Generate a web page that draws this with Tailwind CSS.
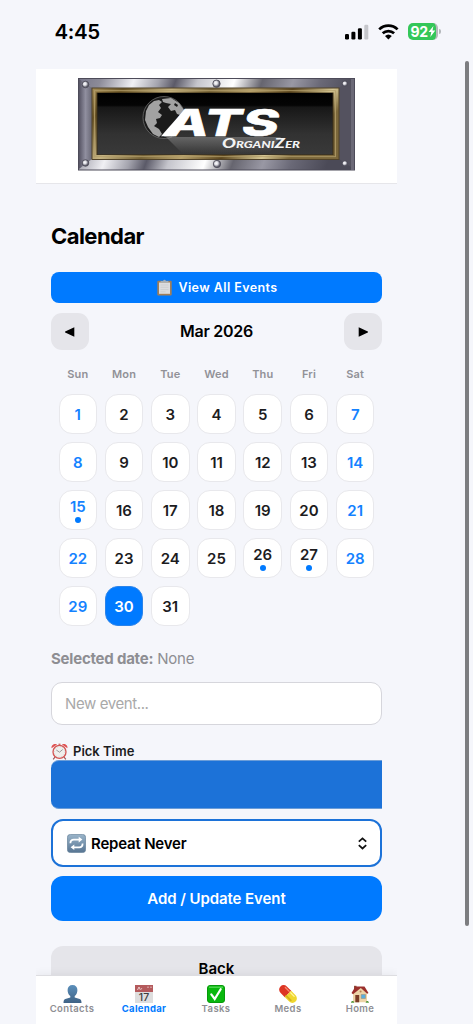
<!DOCTYPE html>
<html lang="en">
<head>
    <meta charset="UTF-8">
    <meta name="viewport" content="width=device-width, initial-scale=1.0">
    <title>ATS Organizer - Calendar</title>
    <script src="https://cdn.jsdelivr.net/npm/@tailwindcss/browser@4"></script>
</head>
<body class="relative h-[1024px] overflow-hidden bg-[#f5f6fb] text-black font-['Inter','Liberation_Sans',sans-serif]">

    <!-- Status bar -->
    <div class="flex h-[69px] items-start justify-between pl-[54.5px] pr-[32px]">
        <span id="clock" class="mt-[20px] text-[20.5px] leading-6 font-semibold tracking-[-0.4px]">4:45</span>
        <div class="mt-[23px] flex h-[17px] items-center">
            <svg class="mr-[9px]" width="24" height="16" viewBox="0 0 24 16">
                <rect x="0" y="10" width="4" height="5.5" rx="1.2"/>
                <rect x="6.4" y="7.8" width="4" height="7.7" rx="1.2"/>
                <rect x="12.9" y="4.2" width="4" height="11.3" rx="1.2"/>
                <rect x="19.3" y="0.8" width="4" height="14.7" rx="1.2" fill="#c5c6cb"/>
            </svg>
            <svg class="mr-[9px]" width="21" height="16" viewBox="0 0 21 16" fill="none" stroke="#000" stroke-width="2.7">
                <path d="M1.2 5.4a13.2 13.2 0 0 1 18.4 0"/>
                <path d="M4.7 9.3a8.3 8.3 0 0 1 11.4 0"/>
                <path d="M10.4 15.6L7 12.1a5 5 0 0 1 6.8 0z" fill="#000" stroke="none"/>
            </svg>
            <div class="flex h-[17px] w-[30px] items-center overflow-hidden rounded-[5px] border-r-2 border-[#b4b8b9] bg-[#34c759] pl-[2.5px] text-[14px] leading-none font-bold tracking-[-0.4px] text-white">
                <span id="battery">92</span>
                <svg width="8" height="11" viewBox="0 0 8 11" fill="#fff"><path d="M5.4 0L.6 6.1h2.7L2.3 11l5-6.4H4.5z"/></svg>
            </div>
            <div class="ml-px h-[5px] w-[2px] rounded-r-full bg-[#b4b8bb]"></div>
        </div>
    </div>

    <div class="ml-[36px] w-[361px]">
        <!-- Logo -->
        <header class="flex h-[115px] justify-center border-b border-[#e6e6ea] bg-white pt-[9px]">
            <svg class="ml-[1px]" width="278" height="93" viewBox="0 0 278 93">
                <defs>
                    <linearGradient id="steel" x1="0" x2="1" y1="0" y2="0.12">
                        <stop offset="0" stop-color="#77768a"/>
                        <stop offset=".08" stop-color="#8c8b98"/>
                        <stop offset=".2" stop-color="#f0f0f4"/>
                        <stop offset=".29" stop-color="#a3a3ad"/>
                        <stop offset=".35" stop-color="#5b5a68"/>
                        <stop offset=".43" stop-color="#c5c5cc"/>
                        <stop offset=".56" stop-color="#ffffff"/>
                        <stop offset=".66" stop-color="#66656f"/>
                        <stop offset=".77" stop-color="#9998a4"/>
                        <stop offset=".87" stop-color="#6a6977"/>
                        <stop offset="1" stop-color="#4b4a57"/>
                    </linearGradient>
                    <linearGradient id="side" x1="0" x2="1">
                        <stop offset="0" stop-color="#555363"/>
                        <stop offset=".5" stop-color="#908f9f"/>
                        <stop offset="1" stop-color="#686775"/>
                    </linearGradient>
                    <linearGradient id="gold" x1="0" x2="1" y1="0" y2=".3">
                        <stop offset="0" stop-color="#a68e58"/>
                        <stop offset=".12" stop-color="#6b5526"/>
                        <stop offset=".3" stop-color="#c5b382"/>
                        <stop offset=".45" stop-color="#756236"/>
                        <stop offset=".6" stop-color="#b8a26c"/>
                        <stop offset=".75" stop-color="#5c461e"/>
                        <stop offset=".9" stop-color="#d6c794"/>
                        <stop offset="1" stop-color="#7b673b"/>
                    </linearGradient>
                    <linearGradient id="panel" x1="0" x2="0" y1="0" y2="1">
                        <stop offset="0" stop-color="#000"/>
                        <stop offset=".2" stop-color="#050505"/>
                        <stop offset=".23" stop-color="#171717"/>
                        <stop offset=".67" stop-color="#323232"/>
                        <stop offset="1" stop-color="#393939"/>
                    </linearGradient>
                    <linearGradient id="shine" x1="0" x2="0" y1="0" y2="1">
                        <stop offset="0" stop-color="#fff" stop-opacity=".25"/>
                        <stop offset="1" stop-color="#fff" stop-opacity="0"/>
                    </linearGradient>
                    <radialGradient id="rivet" cx=".4" cy=".4">
                        <stop offset="0" stop-color="#fff"/>
                        <stop offset=".45" stop-color="#dedee4"/>
                        <stop offset="1" stop-color="#5c5b68"/>
                    </radialGradient>
                </defs>
                <rect x=".5" y=".5" width="276" height="91.5" fill="url(#steel)" stroke="#4d4b59"/>
                <path d="M1 1L14 10V81L1 91z" fill="url(#side)"/>
                <path d="M276 1L261 10V81L276 91z" fill="#54525f"/>
                <path d="M273 1h3v91h-3z" fill="#6b6977"/>
                <rect x="14" y="10" width="247" height="71.5" fill="url(#gold)" stroke="#504228"/>
                <rect x="16.5" y="12.7" width="241" height="66" fill="none" stroke="#b39f6c" stroke-width=".8"/>
                <rect x="18.5" y="14.5" width="237" height="62.5" fill="#3c2e14"/>
                <rect x="19.5" y="15" width="235" height="61.5" fill="url(#panel)"/>
                <g fill="url(#rivet)" stroke="#4b4a57" stroke-width=".8">
                    <circle cx="7.5" cy="6.5" r="3.3"/>
                    <circle cx="138.5" cy="5.7" r="3.7"/>
                    <circle cx="267" cy="5.7" r="2.8"/>
                    <circle cx="7.5" cy="85" r="3.3"/>
                    <circle cx="139" cy="86" r="3.7"/>
                    <circle cx="267" cy="85.5" r="2.8"/>
                </g>

                <!-- Globe -->
                <circle cx="86" cy="39.5" r="21" fill="#1a1a1a" stroke="#777" stroke-width=".7"/>
                <path d="M68 33l3-6 5-4 5-1 3 2-3 3 2 3-3 4 4 3-2 3-4 1 1 4-3 3 5 3 3 5-3 3-6-3-5-7-3-7z" fill="#a2a2a2"/>
                <path d="M84 21l9-1 8 5 5 7-1 6-6-2-2-4-4 1-3-4 3-3-5-1-3-1zM97 25l3 2-1 2-3-2z" fill="#a2a2a2" fill-rule="evenodd"/>
                <path d="M88 59h115l-12 16H104z" fill="url(#shine)"/>
                <path d="M83 58.3L107 31h10L94 58.3z" fill="#fff"/>
                <text x="88" y="58.3" font-family="Inter, Liberation Sans, sans-serif" font-size="37" font-weight="800" font-style="italic" fill="#fff" stroke="#fff" stroke-width=".5" textLength="113" lengthAdjust="spacingAndGlyphs">ATS</text>
                <text x="144" y="70.3" font-family="Lato, Open Sans, sans-serif" font-size="14" font-weight="900" font-style="italic" font-variant="small-caps" fill="#f3f3f3" textLength="78" lengthAdjust="spacingAndGlyphs">OrganiZer</text>
            </svg>
        </header>

        <main class="px-[15px]">
            <h1 class="mt-[37px] text-[22px] leading-[30px] font-bold tracking-[-0.55px]"><span id="title">Calendar</span></h1>

            <button class="mt-[21px] flex h-[31px] w-full items-center justify-center gap-[6px] rounded-[8px] bg-[#007aff] pl-[2px] text-[12.5px] font-semibold tracking-[0.42px] text-white">
                <svg width="15" height="17" viewBox="0 0 15 17">
                    <rect x=".3" y="1.8" width="14.4" height="14.8" rx="1" fill="#a17e58"/>
                    <rect x="2" y="3.5" width="11" height="11.3" fill="#dcdddf"/>
                    <path d="M3.5 6h8M3.5 8.3h8M3.5 10.6h8M3.5 12.8h5" stroke="#c9cacc" stroke-width=".7"/>
                    <path d="M3.6 3.6V2h2.6a1.3 1.3 0 0 1 2.6 0h2.6v1.6z" fill="#a3afb9"/>
                </svg>
                <span class="pt-[2px]">View All Events</span>
            </button>

            <!-- Month switcher -->
            <div class="mt-[10px] flex h-[37px] items-center justify-between">
                <button class="flex h-full w-[38px] items-center justify-center rounded-[11px] bg-[#e5e5ea]">
                    <svg width="10" height="10" viewBox="0 0 10 10"><path d="M9.3.3v9.4L.2 5.5a.6.6 0 0 1 0-1z"/></svg>
                </button>
                <h2 class="pb-[2px] text-[16px] font-semibold tracking-[-0.25px]"><span>Mar 2026</span></h2>
                <button class="flex h-full w-[38px] items-center justify-center rounded-[11px] bg-[#e5e5ea]">
                    <svg width="10" height="10" viewBox="0 0 10 10"><path d="M.7.3v9.4l9.1-4.2a.6.6 0 0 0 0-1z"/></svg>
                </button>
            </div>

            <div class="mx-[7.5px] mt-[16px] grid h-[16px] grid-cols-7 gap-x-[7.7px] text-center text-[11px] leading-[16px] font-semibold tracking-[0.15px] text-[#919197]">
                <span>Sun</span><span>Mon</span><span>Tue</span><span>Wed</span><span>Thu</span><span>Fri</span><span>Sat</span>
            </div>
            <div id="days" class="mx-[7.5px] mt-[12px] grid grid-cols-7 gap-x-[7.7px] gap-y-[8px]"></div>

            <p class="mt-[22px] text-[15px] leading-[22px] tracking-[-0.22px] text-[#8e8e93]"><b class="font-bold">Selected date:</b> <span>None</span></p>
            <input type="text" placeholder="New event..." class="mt-[12px] block h-[43px] w-full rounded-[11px] border border-[#d6d6dc] bg-white px-[13px] text-[15px] tracking-[-0.4px] placeholder:text-[#a9a9a9]">

            <!-- Time -->
            <div class="mt-[18px] flex h-[17px] items-center gap-[5px] text-[13px] font-semibold text-[#1c1c1e]">
                <svg width="17" height="17" viewBox="0 0 17 17">
                    <path d="M4 14l-1.8 2.4M13 14l1.8 2.4" stroke="#9a5552" stroke-width="1.2"/>
                    <path d="M.6 5.2C0 2.5 3 .2 6 1.4zM16.4 5.2C17 2.5 14 .2 11 1.4z" fill="#df5252"/>
                    <path d="M7.5.6h2v2h-2z" fill="#ce7775"/>
                    <circle cx="8.5" cy="8.9" r="6.5" fill="#efefed" stroke="#d45553" stroke-width="1.3"/>
                    <circle cx="8.5" cy="8.9" r="5.2" fill="none" stroke="#aaa" stroke-width=".6" stroke-dasharray=".6 2.1"/>
                    <path d="M5.3 7l3.2 2.2 3.2-2.7" fill="none" stroke="#777" stroke-width=".7"/>
                </svg>
                <span>Pick Time</span>
            </div>
            <div class="h-[49px] rounded-l-[8px] border-y border-[#6b9dd8] bg-[#1c72d8]"></div>

            <!-- Repeat -->
            <div class="mt-[10px] flex h-[48px] items-center rounded-[12px] border-2 border-[#1c72d8] bg-white pl-[14px] pr-[13px]">
                <svg class="mr-[5px]" width="19" height="19" viewBox="0 0 19 19">
                    <defs><linearGradient id="tile" x1="0" x2="0" y1="0" y2="1"><stop stop-color="#9bb5ca"/><stop offset="1" stop-color="#567492"/></linearGradient></defs>
                    <rect x=".4" y=".4" width="18.2" height="18.2" rx="3" fill="url(#tile)" stroke="#637f98" stroke-width=".7"/>
                    <path d="M3.4 9.3c0-2.5 1-3.7 3.4-3.7h5.8M15.6 9.5c0 2.6-1 3.8-3.4 3.8H6.6" fill="none" stroke="#fff" stroke-width="1.8"/>
                    <path d="M11.7 2.8l3.7 2.8-3.7 2.8zM7.3 10.5l-3.7 2.8 3.7 2.8z" fill="#fff"/>
                </svg>
                <span class="flex-1 pt-[2px] text-[15px] font-semibold tracking-[-0.2px]">Repeat Never</span>
                <svg width="9" height="13" viewBox="0 0 9 13" fill="none" stroke="#111" stroke-width="1.7"><path d="M.8 4.7L4.5 1.3l3.7 3.4M.8 8.1l3.7 3.4 3.7-3.4"/></svg>
            </div>

            <button class="mt-[9px] h-[45px] w-full rounded-[12px] bg-[#007aff] pt-[2px] text-[15px] font-semibold tracking-[-0.08px] text-white"><span>Add / Update Event</span></button>
            <button class="mt-[25px] h-[45px] w-full rounded-[12px] bg-[#e5e5ea] pt-[2px] text-[15px] font-semibold"><span>Back</span></button>
        </main>
    </div>

    <!-- Bottom tabs -->
    <nav class="absolute bottom-0 left-[36px] grid h-[49px] w-[361px] grid-cols-5 border-t border-[#dddde1] bg-white pt-[9px] pr-[1px] text-[9.5px] leading-[12px] font-semibold tracking-[0.4px] text-[#8e8e93] shadow-[0_-2px_8px_rgba(0,0,0,0.05)] [clip-path:inset(-12px_0_0_0)]">
        <a class="flex flex-col items-center">
            <svg width="19" height="18" viewBox="0 0 19 18">
                <defs><linearGradient id="person" x1="0" x2="0" y1="0" y2="1"><stop stop-color="#5b8fbb"/><stop offset="1" stop-color="#3f6285"/></linearGradient></defs>
                <path d="M9.5 0c3.1 0 4.9 2 4.9 5 0 2.5-.9 4.9-2.7 6v1.4l5 1.5c1.3.5 1.8 1.7 1.8 4.1H.5c0-2.4.5-3.6 1.8-4.1l5-1.5V11C5.5 9.9 4.6 7.5 4.6 5c0-3 1.8-5 4.9-5z" fill="url(#person)"/>
            </svg>
            <span>Contacts</span>
        </a>
        <a class="flex flex-col items-center text-[#007aff]">
            <svg width="18" height="18" viewBox="0 0 18 18">
                <rect width="18" height="18" fill="#dedede"/>
                <rect width="18" height="7" fill="#b45a5c"/>
                <path d="M2.5 5l1.5-3 1.3 2.8M6 4.500l.8-1.3M13 1.5v1.5M16 1.5v1.5" stroke="#f1d8d8" stroke-width=".9" fill="none"/>
                <text x="9" y="16.2" text-anchor="middle" font-family="Inter, sans-serif" font-size="10.5" letter-spacing="0" font-weight="500" fill="#3d3d3d">17</text>
            </svg>
            <span class="font-bold tracking-[0.3px]">Calendar</span>
        </a>
        <a class="flex flex-col items-center">
            <svg width="18" height="18" viewBox="0 0 18 18">
                <rect x=".5" y=".5" width="17" height="17" rx="2.5" fill="#09b80e" stroke="#079a0b"/>
                <path d="M2 2.2h14" stroke="#5bdc5d" stroke-width="1.2"/>
                <path d="M4.3 9.4l3.4 4.6 6-9.8" fill="none" stroke="#fff" stroke-width="2.2" stroke-linecap="round"/>
            </svg>
            <span>Tasks</span>
        </a>
        <a class="flex flex-col items-center">
            <svg width="18" height="18" viewBox="0 0 18 18">
                <g transform="rotate(45 9 9)">
                    <path d="M9 4.5H2.8a4.5 4.5 0 0 0 0 9H9z" fill="#dd3524"/>
                    <path d="M9 4.5h6.2a4.5 4.5 0 0 1 0 9H9z" fill="#f0d72e"/>
                    <path d="M9 11.5h6.5" stroke="#d2b51e" stroke-width="1.8" stroke-linecap="round"/>
                    <path d="M2.5 6.3H8" stroke="#f98c73" stroke-width="1.2" stroke-linecap="round"/>
                    <path d="M10 6.3h5" stroke="#fff6a0" stroke-width="1.2" stroke-linecap="round"/>
                </g>
            </svg>
            <span>Meds</span>
        </a>
        <a class="flex flex-col items-center">
            <svg width="18" height="18" viewBox="0 0 18 18">
                <path d="M3 .8h2.5V4H3z" fill="#8d4a38"/>
                <path d="M2 8l7-6 7 6v9.3H2z" fill="#edd4a8"/>
                <path d="M4.5 1.5h9L17.5 8l-1.3.8L9.8 3 2 9.3.5 8z" fill="#9b2f2c"/>
                <path d="M4.3 10h3.9v7.3H4.3z" fill="#7a3d26"/>
                <path d="M10.2 9.5h4.3v4h-4.3z" fill="#58aee0" stroke="#9c8a6c" stroke-width=".5"/>
                <circle cx="9.6" cy="6.5" r="1" fill="#b97f58"/>
                <path d="M0 17.8c0-2.500 3-2.500 3.300 0zM14.700 17.800c0-2.500 3-2.500 3.300 0z" fill="#54963b"/>
            </svg>
            <span>Home</span>
        </a>
    </nav>

    <!-- Scroll indicator -->
    <div class="absolute top-[61px] left-[465px] h-[865px] w-[4px] rounded-full bg-[#7c7d80]"></div>

    <script>
        const days = document.getElementById('days');
        const eventDays = [15, 26, 27];
        const selectedDay = 30;

        for (let day = 1; day <= 31; day++) {
            const cell = document.createElement('button');
            const weekend = day % 7 === 1 || day % 7 === 0;
            cell.className = 'flex h-[40px] flex-col items-center justify-center rounded-[13px] border text-[15px] leading-[18px] font-semibold ';
            if (day === selectedDay) {
                cell.className += 'border-[#2a83ea] bg-[#007aff] text-white ';
            } else if (weekend) {
                cell.className += 'border-[#e8e8ec] bg-white text-[#1482ff] ';
            } else {
                cell.className += 'border-[#e8e8ec] bg-white text-[#1c1c1e] ';
            }
            cell.innerHTML = '<span>' + day + '</span>';
            if (eventDays.includes(day)) {
                cell.className += 'pt-px';
                cell.innerHTML += '<i class="mt-px block size-[6px] rounded-full bg-[#007aff]"></i>';
            } else {
                cell.className += 'pt-[2px]';
            }
            days.appendChild(cell);
        }
    </script>
</body>
</html>
